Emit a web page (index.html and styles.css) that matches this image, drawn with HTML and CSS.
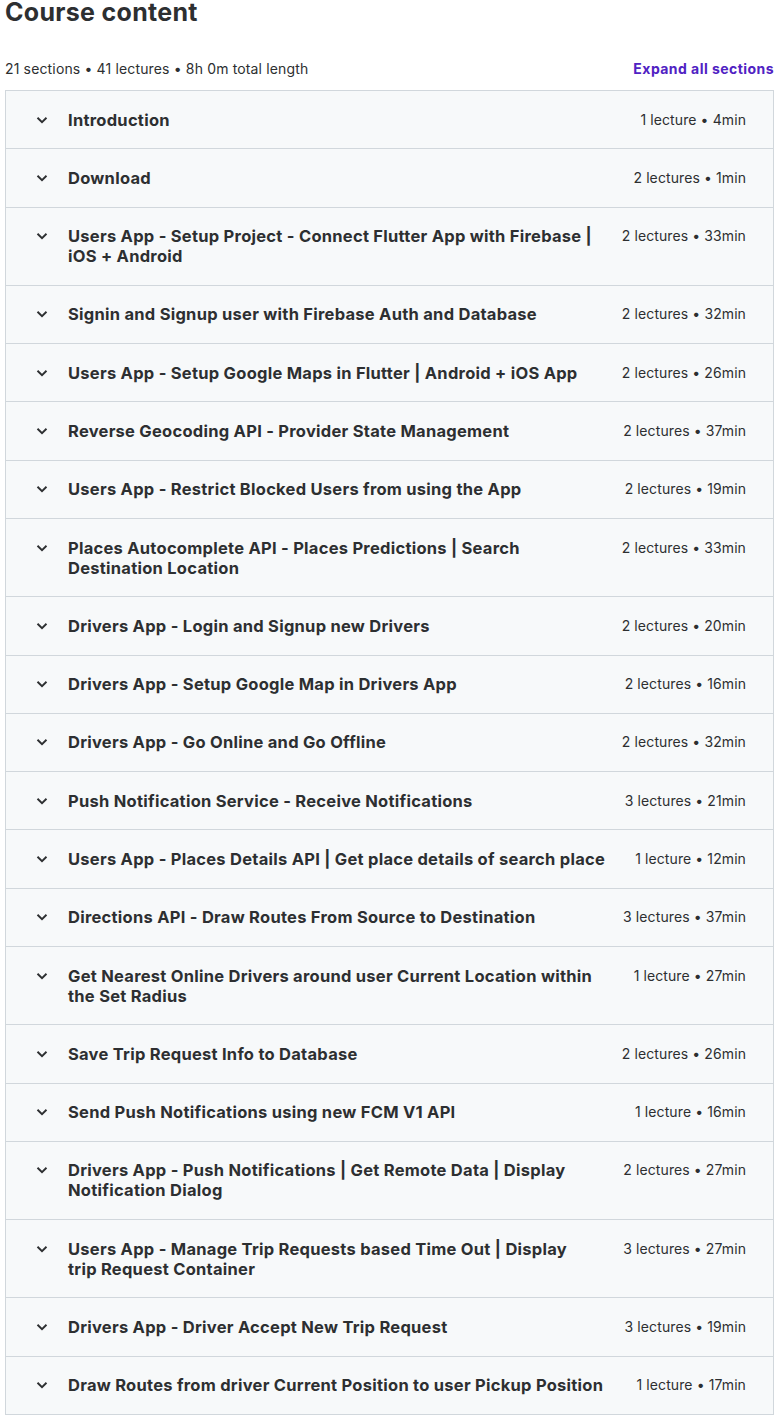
FILE: index.html
```html
<!DOCTYPE html>
<html lang="en">
<head>
<meta charset="utf-8">
<title>Course content</title>
<link rel="stylesheet" href="styles.css">
</head>
<body>
<section class="curriculum">
  <h2 class="curriculum-title">Course content</h2>
  <div class="curriculum-bar">
    <span class="curriculum-stats">21 sections • 41 lectures • 8h 0m total length</span>
    <button class="expand-link" type="button">Expand all sections</button>
  </div>
  <div class="sections">
    <div class="section-row"><span class="chev"><svg viewBox="0 0 12 8" width="12" height="8"><path d="M1.5 1.8 6 6.2l4.5-4.4" fill="none" stroke="currentColor" stroke-width="1.9"/></svg></span><span class="section-name">Introduction</span><span class="section-meta">1 lecture • 4min</span></div>
    <div class="section-row"><span class="chev"><svg viewBox="0 0 12 8" width="12" height="8"><path d="M1.5 1.8 6 6.2l4.5-4.4" fill="none" stroke="currentColor" stroke-width="1.9"/></svg></span><span class="section-name">Download</span><span class="section-meta">2 lectures • 1min</span></div>
    <div class="section-row"><span class="chev"><svg viewBox="0 0 12 8" width="12" height="8"><path d="M1.5 1.8 6 6.2l4.5-4.4" fill="none" stroke="currentColor" stroke-width="1.9"/></svg></span><span class="section-name">Users App - Setup Project - Connect Flutter App with Firebase | iOS + Android</span><span class="section-meta">2 lectures • 33min</span></div>
    <div class="section-row"><span class="chev"><svg viewBox="0 0 12 8" width="12" height="8"><path d="M1.5 1.8 6 6.2l4.5-4.4" fill="none" stroke="currentColor" stroke-width="1.9"/></svg></span><span class="section-name">Signin and Signup user with Firebase Auth and Database</span><span class="section-meta">2 lectures • 32min</span></div>
    <div class="section-row"><span class="chev"><svg viewBox="0 0 12 8" width="12" height="8"><path d="M1.5 1.8 6 6.2l4.5-4.4" fill="none" stroke="currentColor" stroke-width="1.9"/></svg></span><span class="section-name">Users App - Setup Google Maps in Flutter | Android + iOS App</span><span class="section-meta">2 lectures • 26min</span></div>
    <div class="section-row"><span class="chev"><svg viewBox="0 0 12 8" width="12" height="8"><path d="M1.5 1.8 6 6.2l4.5-4.4" fill="none" stroke="currentColor" stroke-width="1.9"/></svg></span><span class="section-name">Reverse Geocoding API - Provider State Management</span><span class="section-meta">2 lectures • 37min</span></div>
    <div class="section-row"><span class="chev"><svg viewBox="0 0 12 8" width="12" height="8"><path d="M1.5 1.8 6 6.2l4.5-4.4" fill="none" stroke="currentColor" stroke-width="1.9"/></svg></span><span class="section-name">Users App - Restrict Blocked Users from using the App</span><span class="section-meta">2 lectures • 19min</span></div>
    <div class="section-row"><span class="chev"><svg viewBox="0 0 12 8" width="12" height="8"><path d="M1.5 1.8 6 6.2l4.5-4.4" fill="none" stroke="currentColor" stroke-width="1.9"/></svg></span><span class="section-name">Places Autocomplete API - Places Predictions | Search Destination Location</span><span class="section-meta">2 lectures • 33min</span></div>
    <div class="section-row"><span class="chev"><svg viewBox="0 0 12 8" width="12" height="8"><path d="M1.5 1.8 6 6.2l4.5-4.4" fill="none" stroke="currentColor" stroke-width="1.9"/></svg></span><span class="section-name">Drivers App - Login and Signup new Drivers</span><span class="section-meta">2 lectures • 20min</span></div>
    <div class="section-row"><span class="chev"><svg viewBox="0 0 12 8" width="12" height="8"><path d="M1.5 1.8 6 6.2l4.5-4.4" fill="none" stroke="currentColor" stroke-width="1.9"/></svg></span><span class="section-name">Drivers App - Setup Google Map in Drivers App</span><span class="section-meta">2 lectures • 16min</span></div>
    <div class="section-row"><span class="chev"><svg viewBox="0 0 12 8" width="12" height="8"><path d="M1.5 1.8 6 6.2l4.5-4.4" fill="none" stroke="currentColor" stroke-width="1.9"/></svg></span><span class="section-name">Drivers App - Go Online and Go Offline</span><span class="section-meta">2 lectures • 32min</span></div>
    <div class="section-row"><span class="chev"><svg viewBox="0 0 12 8" width="12" height="8"><path d="M1.5 1.8 6 6.2l4.5-4.4" fill="none" stroke="currentColor" stroke-width="1.9"/></svg></span><span class="section-name">Push Notification Service - Receive Notifications</span><span class="section-meta">3 lectures • 21min</span></div>
    <div class="section-row"><span class="chev"><svg viewBox="0 0 12 8" width="12" height="8"><path d="M1.5 1.8 6 6.2l4.5-4.4" fill="none" stroke="currentColor" stroke-width="1.9"/></svg></span><span class="section-name">Users App - Places Details API | Get place details of search place</span><span class="section-meta">1 lecture • 12min</span></div>
    <div class="section-row"><span class="chev"><svg viewBox="0 0 12 8" width="12" height="8"><path d="M1.5 1.8 6 6.2l4.5-4.4" fill="none" stroke="currentColor" stroke-width="1.9"/></svg></span><span class="section-name">Directions API - Draw Routes From Source to Destination</span><span class="section-meta">3 lectures • 37min</span></div>
    <div class="section-row"><span class="chev"><svg viewBox="0 0 12 8" width="12" height="8"><path d="M1.5 1.8 6 6.2l4.5-4.4" fill="none" stroke="currentColor" stroke-width="1.9"/></svg></span><span class="section-name">Get Nearest Online Drivers around user Current Location within the Set Radius</span><span class="section-meta">1 lecture • 27min</span></div>
    <div class="section-row"><span class="chev"><svg viewBox="0 0 12 8" width="12" height="8"><path d="M1.5 1.8 6 6.2l4.5-4.4" fill="none" stroke="currentColor" stroke-width="1.9"/></svg></span><span class="section-name">Save Trip Request Info to Database</span><span class="section-meta">2 lectures • 26min</span></div>
    <div class="section-row"><span class="chev"><svg viewBox="0 0 12 8" width="12" height="8"><path d="M1.5 1.8 6 6.2l4.5-4.4" fill="none" stroke="currentColor" stroke-width="1.9"/></svg></span><span class="section-name">Send Push Notifications using new FCM V1 API</span><span class="section-meta">1 lecture • 16min</span></div>
    <div class="section-row"><span class="chev"><svg viewBox="0 0 12 8" width="12" height="8"><path d="M1.5 1.8 6 6.2l4.5-4.4" fill="none" stroke="currentColor" stroke-width="1.9"/></svg></span><span class="section-name">Drivers App - Push Notifications | Get Remote Data | Display Notification Dialog</span><span class="section-meta">2 lectures • 27min</span></div>
    <div class="section-row"><span class="chev"><svg viewBox="0 0 12 8" width="12" height="8"><path d="M1.5 1.8 6 6.2l4.5-4.4" fill="none" stroke="currentColor" stroke-width="1.9"/></svg></span><span class="section-name">Users App - Manage Trip Requests based Time Out | Display trip Request Container</span><span class="section-meta">3 lectures • 27min</span></div>
    <div class="section-row"><span class="chev"><svg viewBox="0 0 12 8" width="12" height="8"><path d="M1.5 1.8 6 6.2l4.5-4.4" fill="none" stroke="currentColor" stroke-width="1.9"/></svg></span><span class="section-name">Drivers App - Driver Accept New Trip Request</span><span class="section-meta">3 lectures • 19min</span></div>
    <div class="section-row"><span class="chev"><svg viewBox="0 0 12 8" width="12" height="8"><path d="M1.5 1.8 6 6.2l4.5-4.4" fill="none" stroke="currentColor" stroke-width="1.9"/></svg></span><span class="section-name">Draw Routes from driver Current Position to user Pickup Position</span><span class="section-meta">1 lecture • 17min</span></div>
  </div>
</section>
</body>
</html>
```

FILE: styles.css
```css
* {
  box-sizing: border-box;
}

html, body {
  background: #ffffff;
}

body {
  margin: 0 5px;
  color: #2d2f31;
  font-family: Inter, "Noto Sans", Arial, sans-serif;
}

.curriculum-title {
  margin: 0;
  font-size: 25px;
  line-height: 25px;
  font-weight: 700;
  letter-spacing: 0.3px;
}

.curriculum-bar {
  display: flex;
  align-items: center;
  justify-content: space-between;
  margin-top: 34px;
  height: 20px;
}

.curriculum-stats {
  font-size: 14px;
  line-height: 20px;
  font-weight: 400;
  letter-spacing: 0.15px;
}

.expand-link {
  border: 0;
  padding: 0;
  background: none;
  font-family: inherit;
  font-size: 14px;
  line-height: 20px;
  font-weight: 700;
  letter-spacing: 0.45px;
  color: #5022c3;
  cursor: pointer;
}

.sections {
  margin-top: 11px;
  border: 1px solid #d1d7dc;
  border-bottom: 0;
}

.section-row {
  display: flex;
  align-items: flex-start;
  padding: 18.65px 27px 18.65px 30px;
  background: #f7f9fa;
  border-bottom: 1px solid #d1d7dc;
}

.chev {
  flex: none;
  width: 12px;
  height: 20px;
  display: flex;
  align-items: center;
  margin-right: 20px;
  color: #2d2f31;
}

.chev svg {
  display: block;
}

.section-name {
  flex: 1;
  min-width: 0;
  font-size: 16.5px;
  line-height: 20px;
  font-weight: 700;
  letter-spacing: 0.26px;
}

.section-meta {
  flex: none;
  margin-left: 28px;
  font-size: 14px;
  line-height: 20px;
  font-weight: 400;
  letter-spacing: 0.1px;
}
```
